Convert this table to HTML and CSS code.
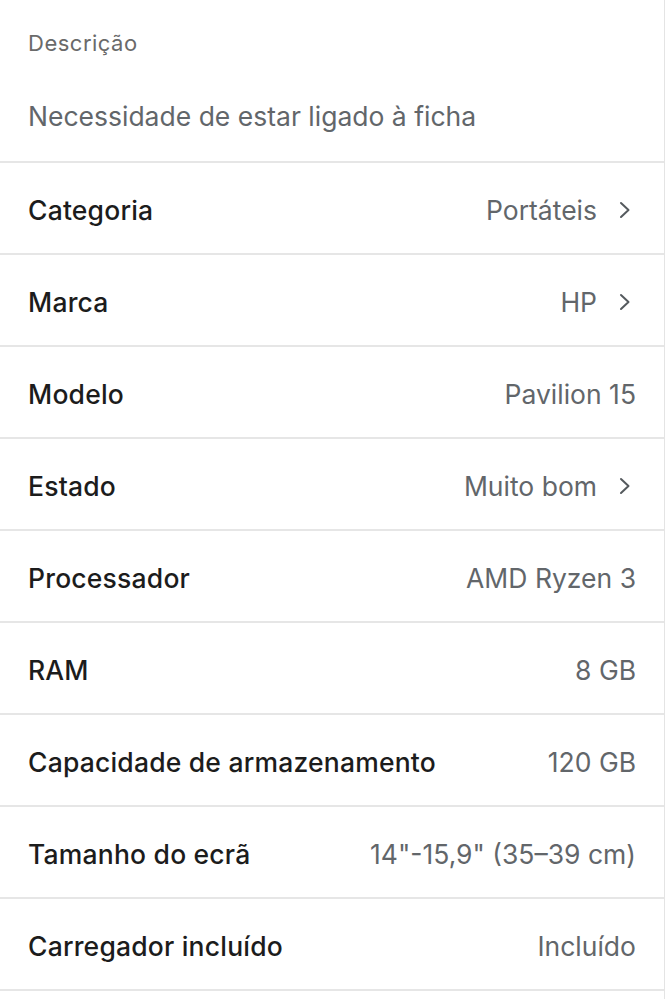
FILE: index.html
```html
<!DOCTYPE html>
<html lang="pt">
<head>
<meta charset="utf-8">
<link rel="stylesheet" href="styles.css">
</head>
<body>
<div class="page">
  <section class="desc">
    <div class="desc-title">Descrição</div>
    <div class="desc-text">Necessidade de estar ligado à ficha</div>
  </section>
  <div class="row"><span class="label">Categoria</span><span class="value">Portáteis<svg class="chev" viewBox="0 0 12 18"><path d="M2 2 L9.5 9 L2 16"/></svg></span></div>
  <div class="row"><span class="label">Marca</span><span class="value">HP<svg class="chev" viewBox="0 0 12 18"><path d="M2 2 L9.5 9 L2 16"/></svg></span></div>
  <div class="row"><span class="label">Modelo</span><span class="value plain">Pavilion 15</span></div>
  <div class="row"><span class="label">Estado</span><span class="value">Muito bom<svg class="chev" viewBox="0 0 12 18"><path d="M2 2 L9.5 9 L2 16"/></svg></span></div>
  <div class="row"><span class="label">Processador</span><span class="value plain">AMD Ryzen 3</span></div>
  <div class="row"><span class="label">RAM</span><span class="value plain">8 GB</span></div>
  <div class="row"><span class="label">Capacidade de armazenamento</span><span class="value plain">120 GB</span></div>
  <div class="row"><span class="label">Tamanho do ecrã</span><span class="value plain">14"-15,9" (35–39 cm)</span></div>
  <div class="row"><span class="label">Carregador incluído</span><span class="value plain">Incluído</span></div>
</div>
</body>
</html>
```

FILE: styles.css
```css
html, body {
  margin: 0;
  padding: 0;
  background: #ffffff;
}
body {
  font-family: Inter, "Noto Sans", "Liberation Sans", sans-serif;
}
.page {
  width: 664px;
  min-height: 999px;
  border-right: 1px solid #e4e4e4;
  box-sizing: content-box;
}
.desc {
  height: 163px;
  border-bottom: 2px solid #e6e6e6;
  padding-left: 28px;
  box-sizing: border-box;
  display: flex;
  flex-direction: column;
}
.desc-title {
  font-size: 22px;
  letter-spacing: 0.5px;
  color: #6a6a6a;
  margin-top: 30px;
  line-height: 26px;
}
.desc-text {
  font-size: 26.5px;
  color: #62666a;
  margin-top: 44px;
  line-height: 32px;
}
.row {
  height: 92px;
  box-sizing: border-box;
  border-bottom: 2px solid #e6e6e6;
  padding: 4px 28px 0 28px;
  display: flex;
  align-items: center;
  justify-content: space-between;
}
.label {
  font-size: 26.5px;
  font-weight: 500;
  letter-spacing: 0.2px;
  color: #1c1c1c;
}
.value {
  font-size: 26.5px;
  color: #62666a;
  display: flex;
  align-items: center;
  gap: 22px;
  margin-right: 5px;
}
.value.plain {
  margin-right: 0;
}
.chev {
  width: 12px;
  height: 18px;
  fill: none;
  stroke: #555a5e;
  stroke-width: 2;
  stroke-linecap: round;
  stroke-linejoin: round;
}
```
